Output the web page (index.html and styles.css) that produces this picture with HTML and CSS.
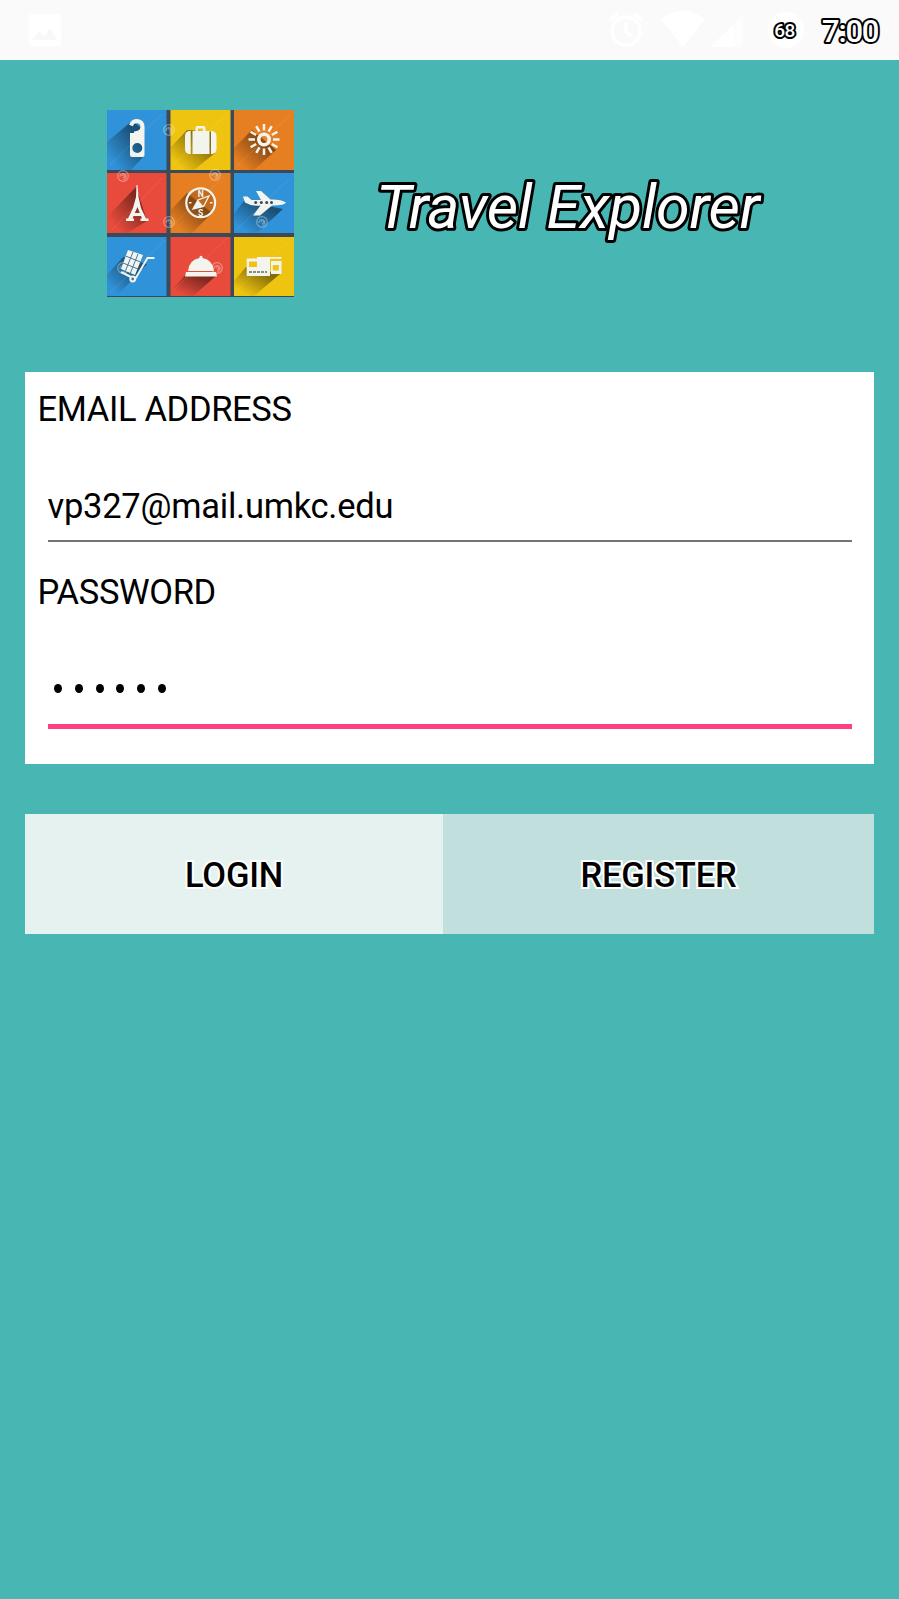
FILE: index.html
```
<!DOCTYPE html>
<html lang="en">
<head>
<meta charset="utf-8">
<title>Travel Explorer</title>
<link rel="stylesheet" href="styles.css">
</head>
<body>
<header class="status">
  <svg class="notification" width="34" height="34" viewBox="0 0 34 34"><rect x="1" y="1" width="32" height="32" rx="3" fill="#fff"/><path d="M4 27l7-9 5 6 6-9 7 12z" fill="#f8f8f8"/></svg>
  <div class="status-icons">
    <svg class="alarm" width="36" height="38" viewBox="0 0 36 38" fill="none" stroke="#fff" stroke-width="3.5"><circle cx="18" cy="20" r="14"/><path d="M18 11v10l6 4M2 9l8-6M34 9l-8-6"/></svg>
    <svg class="wifi" width="44" height="36" viewBox="0 0 44 36"><path d="M0 8Q22-8 44 8L22 36z" fill="#fff"/></svg>
    <svg class="signal" width="34" height="32" viewBox="0 0 34 32"><path d="M0 31L23 9v22z" fill="#fff"/><path d="M23 9l10-9v31H23z" fill="#fdfdfd"/></svg>
    <svg class="battery" width="36" height="60"><circle cx="18" cy="30" r="18" fill="#fff"/><text class="outlined" x="16.500" y="36.500" text-anchor="middle">68</text></svg>
    <svg class="clock" width="64" height="60"><text class="outlined" x="3" y="42">7:00</text></svg>
  </div>
</header>
<main class="screen">
  <div class="brand">
    <svg class="logo" viewBox="0 0 187 187">
      <defs>
        <linearGradient id="shade" x1="1" y1="0" x2="0" y2="1"><stop offset=".25" stop-color="#000" stop-opacity=".45"/><stop offset=".85" stop-color="#000" stop-opacity="0"/></linearGradient>
        <g id="swirl" fill="none" stroke="#fff" stroke-opacity=".35" stroke-width="1.2"><circle r="5.300"/><path d="M-3 1a3 3 0 1 1 3 2.500M-1 0a1.400 1.400 0 1 1 1 1.400"/></g>
        <path id="ray" d="M0-9V-15.500" stroke="#f4f4ef" stroke-width="2.500"/>
      </defs>
      <rect width="187" height="187" fill="#3b4a59"/>
      <path fill="#3092d8" d="M0 0h59.500v60H0zM127 63h60v60h-60zM0 127h59.500v59H0z"/>
      <path fill="#efc410" d="M63.500 0h60v60h-60zM127 127h60v59h-60z"/>
      <path fill="#e67e22" d="M127 0h60v60h-60zM63.500 63h60v60h-60z"/>
      <path fill="#e84b3c" d="M0 63h59.500v60H0zM63.500 127h60v59h-60z"/>
      <g fill="url(#shade)">
        <path d="M25 11L0 32v28h24l13-14V20z"/>
        <path d="M80 20L64 37v23h23l21-17V22z"/>
        <path d="M145 20l-18 18v22h20l22-20z"/>
        <path d="M29 77L2 105v18h18l20-12z"/>
        <path d="M80 83l-16 17v23h21l20-20z"/>
        <path d="M137 91l-10 13v19h23l26-24z"/>
        <path d="M16 147L0 165v21h10l30-32z"/>
        <path d="M79 164l-15 17v5h22l23-20z"/>
        <path d="M139 157l-12 14v15h20l26-22z"/>
      </g>
      <path fill="none" stroke="#fff" stroke-opacity=".1" d="M3 55L55 4M66 55L121 3M129 57L183 5M5 120L55 68M63 118l55-52M129 120l54-52M3 183l55-53M66 181l55-54M129 181l54-50"/>
      <use href="#swirl" x="62" y="20"/><use href="#swirl" x="16" y="66"/><use href="#swirl" x="108" y="65"/><use href="#swirl" x="62" y="112"/><use href="#swirl" x="155" y="112"/><use href="#swirl" x="16" y="158"/><use href="#swirl" x="110" y="158"/>
      <g fill="#f4f4ef">
        <path fill-rule="evenodd" d="M37.500 17V45q0 2-2 2H25q-2 0-2-2V23h7q4-1 7.500-6zM25.300 38a5 5 0 1 0 10 0a5 5 0 1 0-10 0z"/>
        <path d="M24 15.500Q25.500 11 30 11Q35.500 11.500 35.500 17Q35 23.500 27 23.500" fill="none" stroke="#f4f4ef" stroke-width="4"/>
        <path fill-rule="evenodd" d="M88.500 21v-3q0-2 2-2h6q2 0 2 2v3h4v23H85.500V21zm2.500 0h5v-2.500h-5z"/><path d="M83.700 21v23h-2q-3.700-1-3.700-5V26q0-4 3.700-5zM104 21h1.500q4 1 4 5v13q0 4-4 5H104z"/>
        <path d="M29.500 75h1l1 12 2.500 11L39 108.500h2.500V111h-8v-2.500h1.500l-1-2.500h-7.500l-1 2.500H27V111h-8v-2.500h2L26 98l3-11zM27.800 103h5l-2.300-6z" fill-rule="evenodd"/>
        <path d="M136 86.500h4.500l4 3.500h9.500l-5-9h5l9.500 8.500q10-.5 15.500 3-1 3-14 3l-12 10h-7l7.500-10q-9 1-15.500-3z"/>
        <path d="M21 140l15 5-8 20-14-6z"/>
        <path d="M81 161q1-11 11.500-13a1.600 1.600 0 1 1 3 0Q106 150 107 161zM79 162h30l1 4.500H78z"/>
        <path fill-rule="evenodd" d="M139.700 148.500h10.300v-1.500h24.500v1.800H163V166h-23.300zM142 151.500v5.500h8v-5.500zM164 151h10.500v13H164zm1.800 4v5.500h6V155z"/>
      </g>
      <g transform="translate(157 29.500)"><circle r="5.200" fill="none" stroke="#f4f4ef" stroke-width="3.600"/>
        <use href="#ray"/><use href="#ray" transform="rotate(30)"/><use href="#ray" transform="rotate(60)"/><use href="#ray" transform="rotate(90)"/><use href="#ray" transform="rotate(120)"/><use href="#ray" transform="rotate(150)"/><use href="#ray" transform="rotate(180)"/><use href="#ray" transform="rotate(210)"/><use href="#ray" transform="rotate(240)"/><use href="#ray" transform="rotate(270)"/><use href="#ray" transform="rotate(300)"/><use href="#ray" transform="rotate(330)"/>
      </g>
      <g fill="#3b4a59"><circle cx="148.700" cy="92.500" r="1.500"/><circle cx="154.300" cy="92.500" r="1.500"/><circle cx="159.700" cy="92.500" r="1.500"/><circle cx="164.500" cy="92.500" r="1.500"/></g>
      <circle cx="93.700" cy="92.800" r="14.400" fill="#7a4517" fill-opacity=".35" stroke="#f4f4ef" stroke-width="2.200"/>
      <path d="M102 86l-5.500 10.500L86 99l5-9z" fill="none" stroke="#f4f4ef" stroke-width="1.300"/><path d="M86 99l5-9 5.500 6.500zM82 92h2.500v1.500H82zM103 92h2.500v1.500H103z" fill="#f4f4ef"/>
      <text class="compass-letter" x="93.700" y="87">N</text><text class="compass-letter" x="93.700" y="105.500">S</text>
      <path d="M47.500 148h-7L27 171M14 162l12 6" fill="none" stroke="#f4f4ef" stroke-width="2"/><circle cx="25.700" cy="169" r="2.400" fill="#44789e" stroke="#f4f4ef" stroke-width="2"/>
      <path d="M18.500 146l15 6M16 153l15 6M26 142l-8 20M31 144l-8 20" stroke="#44789e" fill="none"/>
      <path d="M142 162h18" stroke="#6b6a55" stroke-width="1.400" stroke-dasharray="3 1" fill="none"/>
    </svg>
    <h1 class="title"><svg width="410" height="187"><text class="outlined" x="6" y="118">Travel Explorer</text></svg></h1>
  </div>
  <form class="card">
    <label class="label">EMAIL ADDRESS</label>
    <div class="field">vp327@mail.umkc.edu</div>
    <label class="label second">PASSWORD</label>
    <div class="field password"><i></i><i></i><i></i><i></i><i></i><i></i></div>
  </form>
  <div class="actions">
    <button class="button login">LOGIN</button>
    <button class="button register">REGISTER</button>
  </div>
</main>
</body>
</html>
```
FILE: styles.css
```
* { box-sizing: border-box; }
body { margin: 0; width: 899px; height: 1599px; background: #48b7b4; font-family: Roboto, sans-serif; color: #000; overflow: hidden; }
.status { height: 60px; background: #fafafa; display: flex; justify-content: space-between; padding: 0 16px 0 28px; }
.notification { margin-top: 13px; }
.status-icons { display: flex; align-items: flex-start; }
.alarm { margin: 11px 17px 0 0; }
.wifi { margin: 11px 5px 0 0; }
.signal { margin: 16px 24px 0 0; }
.outlined { fill: #fff; stroke: #000; paint-order: stroke fill; stroke-linejoin: round; stroke-width: 4px; }
.battery { margin-right: 15px; font-size: 19px; font-weight: 500; letter-spacing: -.6px; }
.clock { font-size: 31px; font-weight: 500; letter-spacing: -1.2px; }
.screen { padding: 50px 25px 0; }
.brand { height: 262px; padding-left: 82px; display: flex; align-items: flex-start; }
.logo { width: 187px; height: 187px; flex: none; }
.compass-letter { font: 700 8.5px Roboto, sans-serif; fill: #f4f4ef; text-anchor: middle; }
.title { margin: 0 0 0 76px; font-size: 61px; font-weight: 400; font-style: italic; letter-spacing: -.3px; }
.title svg { display: block; }
.title .outlined { stroke-width: 6px; }
.card { height: 391.500px; background: #fff; padding: 17px 22.500px 0 12.5px; font-size: 34.5px; line-height: 41px; letter-spacing: -.25px; }
.label { display: block; white-space: nowrap; letter-spacing: -.35px; }
.field { height: 112px; margin-left: 10px; padding-top: 56px; border-bottom: 2px solid #737373; }
.second { margin-top: 30px; }
.password { height: 116px; border-bottom: 5px solid #ff4081; padding: 71px 0 0 6.500px; display: flex; gap: 12.800px; }
.password i { width: 8px; height: 9px; border-radius: 50%; background: #000; }
.actions { display: flex; height: 120px; margin-top: 50px; }
.button { border: 0; padding: 4px 0 0; font: 500 34.5px/41px Roboto, sans-serif; letter-spacing: -.2px; color: #000; -webkit-text-stroke: 4px #fff; paint-order: stroke fill; stroke-linejoin: round; }
.login { width: 418px; background: #e5f2ef; }
.register { flex: 1; background: #c0dfdd; }
```
